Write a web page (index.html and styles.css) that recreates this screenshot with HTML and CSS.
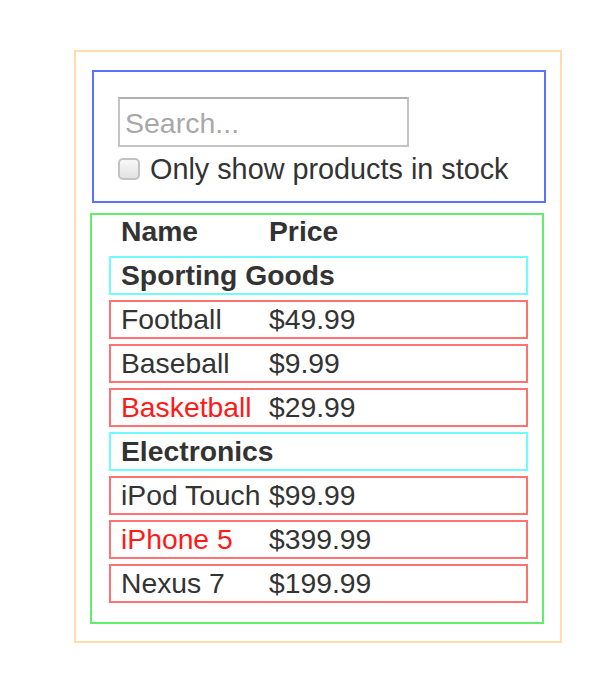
FILE: index.html
```html
<!DOCTYPE html>
<html lang="en">
<head>
<meta charset="utf-8">
<title>Filterable Product Table</title>
<link rel="stylesheet" href="styles.css">
</head>
<body>
<div class="app">
  <div class="search-bar">
    <input class="search-input" type="text" placeholder="Search...">
    <label class="stock-label"><input class="stock-check" type="checkbox"><span>Only show products in stock</span></label>
  </div>
  <div class="product-table">
    <div class="table-head"><span class="col-name">Name</span><span class="col-price">Price</span></div>
    <div class="row category">Sporting Goods</div>
    <div class="row product"><span class="col-name">Football</span><span class="col-price">$49.99</span></div>
    <div class="row product"><span class="col-name">Baseball</span><span class="col-price">$9.99</span></div>
    <div class="row product"><span class="col-name out">Basketball</span><span class="col-price">$29.99</span></div>
    <div class="row category">Electronics</div>
    <div class="row product"><span class="col-name">iPod Touch</span><span class="col-price">$99.99</span></div>
    <div class="row product"><span class="col-name out">iPhone 5</span><span class="col-price">$399.99</span></div>
    <div class="row product"><span class="col-name">Nexus 7</span><span class="col-price">$199.99</span></div>
  </div>
</div>
</body>
</html>
```
FILE: styles.css
```css
* { box-sizing: border-box; }
html, body { background: #ffffff; }
body {
  margin: 0;
  padding: 50px 0 0 74px;
  font-family: "Liberation Sans", Arial, Helvetica, sans-serif;
  color: #333333;
  font-size: 28.3px;
}
.app {
  width: 488px;
  height: 593px;
  border: 2px solid #ffdcaa;
  padding: 18px 0 0 0;
}
.search-bar {
  margin-left: 16px;
  width: 454px;
  height: 133px;
  border: 2px solid #5a72ff;
  padding: 25px 0 0 24px;
}
.search-input {
  display: block;
  width: 291px;
  height: 50px;
  margin: 0;
  border: 2px solid #c4c4c4;
  border-top-color: #b0b0b0;
  padding: 2px 5px 0;
  font-family: inherit;
  font-size: 28.5px;
  color: #333333;
  outline: none;
}
.search-input::placeholder { color: #a8a8a8; }
.stock-label {
  display: flex;
  align-items: center;
  height: 36px;
  margin-top: 4px;
  line-height: 36px;
  font-size: 28.8px;
}
.stock-check {
  appearance: none;
  -webkit-appearance: none;
  width: 22px;
  height: 22px;
  margin: 0 10px 0 0;
  border: 2px solid #c2c2c2;
  border-radius: 5px;
  background: linear-gradient(#f8f8f8, #e2e2e2);
  flex: none;
}
.product-table {
  margin: 10px 0 0 14px;
  width: 454px;
  height: 411px;
  border: 2px solid #62ee6c;
  padding: 0 0 0 17px;
  display: flex;
  flex-direction: column;
  gap: 5px;
}
.table-head {
  display: flex;
  height: 36px;
  line-height: 33px;
  padding-left: 12px;
  font-weight: bold;
}
.col-name { width: 148px; flex: none; white-space: nowrap; }
.col-price { white-space: nowrap; }
.row {
  width: 419px;
  height: 39px;
  line-height: 35px;
  padding-left: 10px;
  display: flex;
}
.category {
  border: 2px solid #72fbff;
  font-weight: bold;
}
.product {
  border: 2px solid #ff7272;
}
.out { color: #ff1a1a; }
```
